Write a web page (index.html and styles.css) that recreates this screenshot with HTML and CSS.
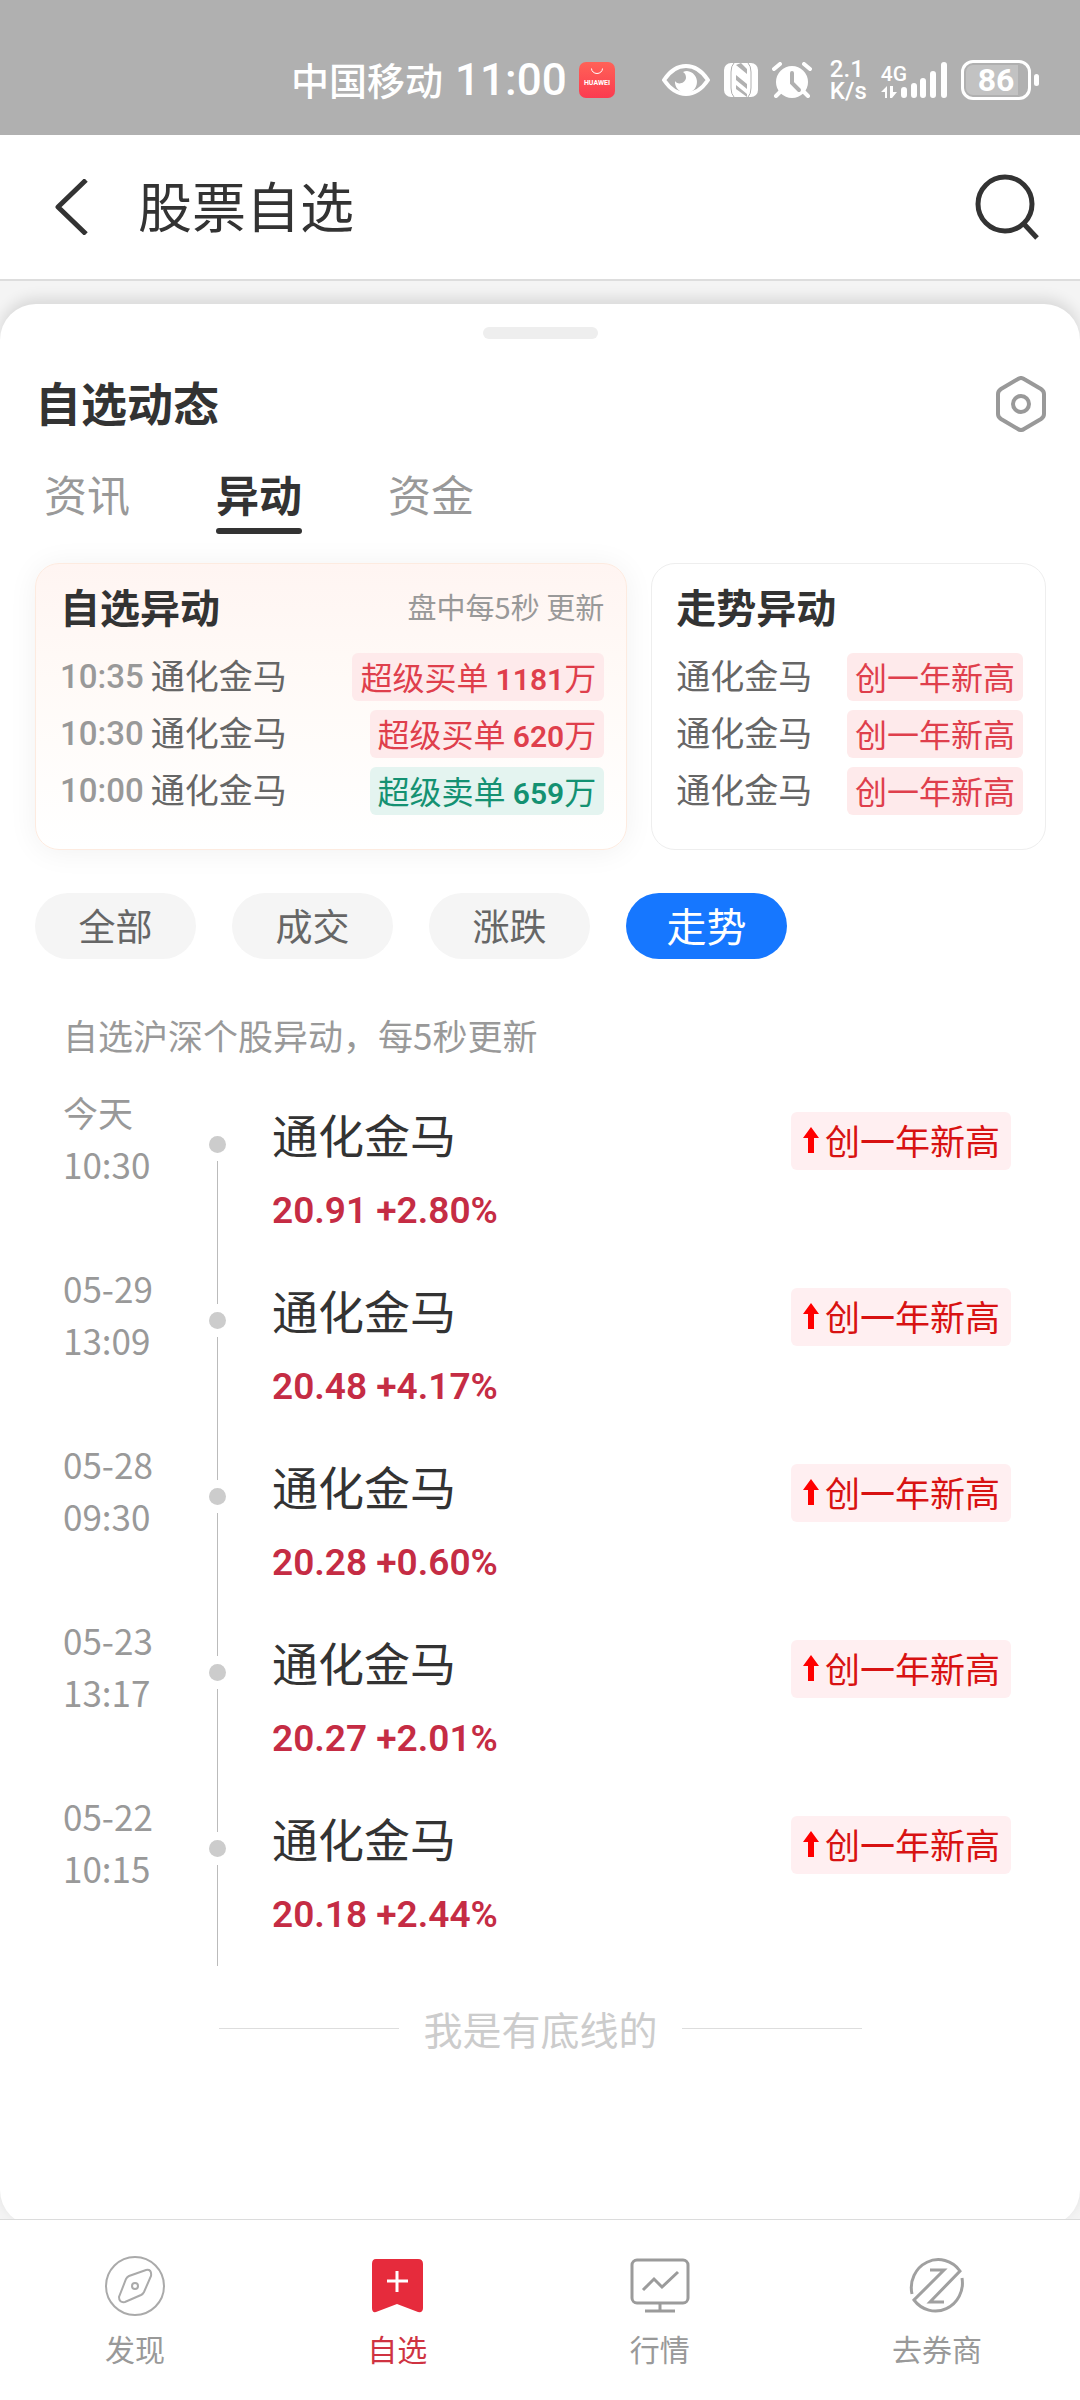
FILE: index.html
```
<!DOCTYPE html>
<html lang="zh-CN">
<head>
  <meta charset="utf-8">
  <meta name="viewport" content="width=device-width, initial-scale=1">
  <title>股票自选</title>
  <link rel="stylesheet" href="styles.css">
</head>
<body>
  <div class="status-bar">
    <div class="status-left">
      <span class="carrier">中国移动</span>
      <span class="clock">11:00</span>
      <svg class="app-icon" width="36" height="36" viewBox="0 0 36 36">
        <defs>
          <linearGradient id="appRed" x1="0" y1="0" x2="0" y2="1">
            <stop offset="0" stop-color="#ff6257"/>
            <stop offset="1" stop-color="#fb3b50"/>
          </linearGradient>
        </defs>
        <rect width="36" height="36" rx="7" fill="url(#appRed)"/>
        <path d="M12.500 6.500a5.500 5 0 0 0 11 0" fill="none" stroke="#fff" stroke-width="1"/>
        <text x="18" y="23" text-anchor="middle" font-size="7" font-weight="700" fill="#fff">HUAWEI</text>
      </svg>
    </div>
    <div class="status-right">
      <svg width="48" height="34" viewBox="0 0 48 34">
        <path d="M2 17C8 8 16 3 24 3s16 5 22 14c-6 9-14 14-22 14S8 26 2 17z" fill="none" stroke="#fff" stroke-width="4" stroke-linejoin="round"/>
        <path d="M25 8a11 11 0 1 1-12 10c2 4 10 3 11-3 0-3-1-5-3-6q2-1 4-1z" fill="#fff"/>
      </svg>
      <svg class="nfc" width="34" height="34" viewBox="0 0 34 34">
        <rect width="34" height="34" rx="7" fill="#fff"/>
        <path d="M10 0Q7 3 7 9v16q0 6 3 9M24 0q3 3 3 9v16q0 6-3 9" fill="none" stroke="#b0b0b0" stroke-width="1"/>
        <path d="M12 12l11 9v5L12 17zM12 22l11 9v3L12 26zM12 2l11 9V6l-6-6z" fill="#b0b0b0"/>
      </svg>
      <svg width="40" height="36" viewBox="0 0 40 36">
        <circle cx="20" cy="20" r="16" fill="#fff"/>
        <path d="M2 7l6-5M38 7l-6-5M8 30l-4 4M32 30l4 4" stroke="#fff" stroke-width="4" stroke-linecap="round"/>
        <path d="M20 11v10l7 7" fill="none" stroke="#b0b0b0" stroke-width="4" stroke-linecap="round"/>
      </svg>
      <div class="speed"><span>2.1</span><span>K/s</span></div>
      <div class="signal">
        <div class="network">
          <span>4G</span>
          <svg width="18" height="12" viewBox="0 0 18 12">
            <path d="M6 0v12H4V6H0zM9 0h3v6h4l-5 6H9z" fill="#fff"/>
          </svg>
        </div>
        <svg width="46" height="36" viewBox="0 0 46 36">
          <path d="M3 28v5M13 24v9M22 19v14M32 12v21M43 3v30" stroke="#fff" stroke-width="6" stroke-linecap="round"/>
        </svg>
      </div>
      <div class="battery"><span class="battery-level">86</span></div>
    </div>
  </div>

  <header class="topbar">
    <button class="icon-btn" type="button" aria-label="返回">
      <svg width="34" height="56" viewBox="0 0 34 56">
        <path d="M31 1L3 28l28 27" fill="none" stroke="#333" stroke-width="5" stroke-linejoin="round"/>
      </svg>
    </button>
    <h1>股票自选</h1>
    <button class="icon-btn" type="button" aria-label="搜索">
      <svg width="66" height="66" viewBox="0 0 66 66">
        <circle cx="30" cy="30" r="27" fill="none" stroke="#333" stroke-width="5"/>
        <path d="M49 50l13 14" stroke="#333" stroke-width="5"/>
      </svg>
    </button>
  </header>

  <main class="page">
    <section class="sheet">
      <div class="handle"></div>
      <div class="sheet-head">
        <h2>自选动态</h2>
        <button class="icon-btn" type="button" aria-label="设置">
          <svg width="50" height="56" viewBox="0 0 50 56">
            <path d="M22 3q3-2 6 0l17 10q3 2 3 5v20q0 3-3 5L28 53q-3 2-6 0L5 43q-3-2-3-5V18q0-3 3-5z" fill="none" stroke="#999" stroke-width="4"/>
            <circle cx="25" cy="28" r="8" fill="none" stroke="#999" stroke-width="4"/>
          </svg>
        </button>
      </div>

      <div class="tabs">
        <button class="tab" type="button">资讯</button>
        <button class="tab active" type="button">异动</button>
        <button class="tab" type="button">资金</button>
      </div>

      <div class="cards">
        <article class="card card-warm">
          <div class="card-head">
            <h3>自选异动</h3>
            <span class="hint">盘中每5秒 更新</span>
          </div>
          <ul class="card-list">
            <li><span class="time">10:35</span><span class="stock">通化金马</span><span class="tag">超级买单 <b>1181</b>万</span></li>
            <li><span class="time">10:30</span><span class="stock">通化金马</span><span class="tag">超级买单 <b>620</b>万</span></li>
            <li><span class="time">10:00</span><span class="stock">通化金马</span><span class="tag green">超级卖单 <b>659</b>万</span></li>
          </ul>
        </article>
        <article class="card">
          <div class="card-head">
            <h3>走势异动</h3>
          </div>
          <ul class="card-list">
            <li><span class="stock">通化金马</span><span class="tag">创一年新高</span></li>
            <li><span class="stock">通化金马</span><span class="tag">创一年新高</span></li>
            <li><span class="stock">通化金马</span><span class="tag">创一年新高</span></li>
          </ul>
        </article>
      </div>

      <div class="chips">
        <button class="chip" type="button">全部</button>
        <button class="chip" type="button">成交</button>
        <button class="chip" type="button">涨跌</button>
        <button class="chip active" type="button">走势</button>
      </div>

      <p class="note">自选沪深个股异动，每5秒更新</p>

      <ul class="timeline">
        <li class="event">
          <div class="when"><span>今天</span><span>10:30</span></div>
          <div class="rail"><i class="dot"></i></div>
          <div class="what"><h4>通化金马</h4><p class="price">20.91 +2.80%</p></div>
          <span class="badge"><svg width="16" height="26" viewBox="0 0 16 26"><path d="M8 0l8 11h-5v15H5V11H0z" fill="#f00"/></svg>创一年新高</span>
        </li>
        <li class="event">
          <div class="when"><span>05-29</span><span>13:09</span></div>
          <div class="rail"><i class="dot"></i></div>
          <div class="what"><h4>通化金马</h4><p class="price">20.48 +4.17%</p></div>
          <span class="badge"><svg width="16" height="26" viewBox="0 0 16 26"><path d="M8 0l8 11h-5v15H5V11H0z" fill="#f00"/></svg>创一年新高</span>
        </li>
        <li class="event">
          <div class="when"><span>05-28</span><span>09:30</span></div>
          <div class="rail"><i class="dot"></i></div>
          <div class="what"><h4>通化金马</h4><p class="price">20.28 +0.60%</p></div>
          <span class="badge"><svg width="16" height="26" viewBox="0 0 16 26"><path d="M8 0l8 11h-5v15H5V11H0z" fill="#f00"/></svg>创一年新高</span>
        </li>
        <li class="event">
          <div class="when"><span>05-23</span><span>13:17</span></div>
          <div class="rail"><i class="dot"></i></div>
          <div class="what"><h4>通化金马</h4><p class="price">20.27 +2.01%</p></div>
          <span class="badge"><svg width="16" height="26" viewBox="0 0 16 26"><path d="M8 0l8 11h-5v15H5V11H0z" fill="#f00"/></svg>创一年新高</span>
        </li>
        <li class="event">
          <div class="when"><span>05-22</span><span>10:15</span></div>
          <div class="rail"><i class="dot"></i></div>
          <div class="what"><h4>通化金马</h4><p class="price">20.18 +2.44%</p></div>
          <span class="badge"><svg width="16" height="26" viewBox="0 0 16 26"><path d="M8 0l8 11h-5v15H5V11H0z" fill="#f00"/></svg>创一年新高</span>
        </li>
      </ul>

      <p class="end">我是有底线的</p>
    </section>
  </main>

  <nav class="bottom-nav">
    <a href="#discover">
      <svg width="60" height="60" viewBox="0 0 60 60" fill="none" stroke="#aaa" stroke-width="2">
        <circle cx="30" cy="30" r="29"/>
        <path d="M24 20l17-6q6-1 5 6l-7 16q-1 2-3 3l-16 7q-6 1-6-5l7-18q1-2 3-3z"/>
        <circle cx="30" cy="30" r="3"/>
      </svg>
      <span>发现</span>
    </a>
    <a href="#watchlist" class="active">
      <svg width="60" height="60" viewBox="0 0 60 60">
        <path d="M9 3h42q5 0 5 5v44q0 5-5 4L30 48 9 56q-4 1-4-4V8q0-5 4-5z" fill="#e62b3c"/>
        <path d="M30 15v21M20 25h21" stroke="#fff" stroke-width="3"/>
      </svg>
      <span>自选</span>
    </a>
    <a href="#market">
      <svg width="60" height="60" viewBox="0 0 60 60" fill="none" stroke="#9b9b9b" stroke-width="3">
        <rect x="2" y="4" width="56" height="43" rx="5"/>
        <path d="M30 47v8M15 55h30M13 34l11-11 8 8 16-15"/>
      </svg>
      <span>行情</span>
    </a>
    <a href="#broker">
      <svg width="60" height="60" viewBox="0 0 60 60" fill="none" stroke="#a0a0a0" stroke-width="3">
        <path d="M5 38A27 28 0 0 1 53 15L23 46h14"/>
        <path d="M55 22A27 28 0 0 1 7 44L37 14H23"/>
      </svg>
      <span>去券商</span>
    </a>
  </nav>
</body>
</html>
```

FILE: styles.css
```
*{
  margin: 0;
  padding: 0;
  box-sizing: border-box;
}
body
{
  min-height: 100vh;
  display: flex;
  flex-direction: column;
  background: #fff;
  color: #333;
  font-family: "Noto Sans CJK SC", sans-serif;
}
ul
{
  list-style: none;
}
svg
{
  display: block;
  flex: none;
}
button
{
  border: none;
  background: none;
  font-family: inherit;
  color: inherit;
  cursor: pointer;
}
a
{
  text-decoration: none;
}

/* status bar */
.status-bar
{
  height: 135px;
  padding: 25px 49px 0 291px;
  display: flex;
  align-items: center;
  justify-content: space-between;
  background: #b0b0b0;
  color: #fff;
}
.status-left, .status-right
{
  display: flex;
  align-items: center;
}
.carrier
{
  font-size: 38px;
  font-weight: 500;
  line-height: 48px;
  padding-bottom: 2px;
}
.clock
{
  margin: 0 12px;
  font-family: Roboto, sans-serif;
  font-size: 44px;
  font-weight: 500;
  line-height: 48px;
}
.app-icon text
{
  font-family: Roboto, sans-serif;
}
.status-right
{
  gap: 14px;
}
.speed
{
  display: flex;
  flex-direction: column;
  margin-left: 4px;
  font-family: Roboto, sans-serif;
  font-size: 24px;
  font-weight: 500;
  line-height: 22px;
}
.signal
{
  display: flex;
  align-items: flex-end;
}
.signal > svg
{
  margin-left: -6px;
}
.network
{
  font-family: Roboto, sans-serif;
  font-size: 21px;
  font-weight: 500;
  line-height: 24px;
}
.battery
{
  width: 70px;
  height: 40px;
  padding: 2px;
  border: 3px solid #fff;
  border-radius: 12px;
  position: relative;
}
.battery::after
{
  content: '';
  position: absolute;
  top: 11px;
  right: -11px;
  width: 5px;
  height: 12px;
  border-radius: 3px;
  background: #fff;
}
.battery-level
{
  display: block;
  border-radius: 7px;
  background: linear-gradient(90deg, #c2c2c2 86%, #b0b0b0 86%);
  font-family: Roboto, sans-serif;
  font-size: 32px;
  font-weight: 700;
  line-height: 30px;
  text-align: center;
}

/* title bar */
.topbar
{
  height: 146px;
  padding: 0 39px 0 55px;
  display: flex;
  align-items: center;
  border-bottom: 2px solid #ddd;
  background: #fff;
}
.topbar h1
{
  flex: 1;
  margin-left: 49px;
  padding-bottom: 4px;
  font-size: 54px;
  font-weight: 400;
  line-height: 72px;
}

/* sheet */
.page
{
  flex: 1;
  display: flex;
  flex-direction: column;
  padding-top: 23px;
  background: #f4f4f4;
}
.sheet
{
  flex: 1;
  margin-bottom: -7px;
  padding: 23px 34px 40px 35px;
  border-radius: 36px;
  background: #fff;
  box-shadow: 0 -6px 14px rgba(0,0,0,0.11);
}
.handle
{
  width: 115px;
  height: 12px;
  margin: 0 auto;
  border-radius: 6px;
  background: #eee;
}
.sheet-head
{
  margin-top: 37px;
  display: flex;
  align-items: flex-start;
  justify-content: space-between;
}
.sheet-head h2
{
  font-size: 46px;
  font-weight: 700;
  line-height: 50px;
}
.tabs
{
  display: flex;
  gap: 86px;
  margin-top: 38px;
  padding-left: 9px;
}
.tab
{
  position: relative;
  padding-bottom: 18px;
  font-size: 43px;
  line-height: 46px;
  color: #999;
}
.tab.active
{
  color: #333;
  font-weight: 700;
}
.tab.active::after
{
  content: '';
  position: absolute;
  left: 0;
  right: 0;
  bottom: 0;
  height: 6px;
  border-radius: 3px;
  background: #333;
}

/* cards */
.cards
{
  display: grid;
  grid-template-columns: 3fr 2fr;
  gap: 24px;
  margin-top: 29px;
}
.card
{
  padding: 18px 22px 34px 24px;
  border: 1px solid #eee;
  border-radius: 24px;
  background: #fff;
}
.card-warm
{
  border-color: #fdebe0;
  background: linear-gradient(#fff5f2, #fffaf7 40%, #fff);
  box-shadow: 0 2px 30px rgba(0,0,0,0.06);
}
.card-head
{
  display: flex;
  align-items: center;
  justify-content: space-between;
}
.card-head h3
{
  font-size: 40px;
  font-weight: 700;
  line-height: 48px;
}
.hint
{
  font-size: 29px;
  line-height: 48px;
  color: #999;
}
.card-list
{
  display: flex;
  flex-direction: column;
  gap: 9px;
  margin-top: 23px;
}
.card-list li
{
  height: 48px;
  display: flex;
  align-items: flex-start;
}
.time
{
  margin-right: 7px;
  font-family: Roboto, sans-serif;
  font-size: 33px;
  font-weight: 500;
  line-height: 48px;
  color: #999;
}
.stock
{
  font-size: 34px;
  line-height: 44px;
  color: #666;
}
.tag
{
  height: 48px;
  margin-left: auto;
  padding: 0 8px;
  border-radius: 6px;
  background: #feeaeb;
  font-size: 32px;
  line-height: 46px;
  color: #df3f4c;
  white-space: nowrap;
}
.tag b
{
  font-family: Roboto, sans-serif;
  font-size: 30px;
  font-weight: 600;
}
.tag.green
{
  background: #e4f4f0;
  color: #149172;
}

/* filters */
.chips
{
  display: flex;
  gap: 36px;
  margin-top: 43px;
}
.chip
{
  width: 161px;
  height: 66px;
  padding-bottom: 2px;
  border-radius: 33px;
  background: #f5f5f5;
  font-size: 37px;
  line-height: 64px;
  color: #666;
}
.chip.active
{
  background: #1677ff;
  font-size: 40px;
  color: #fff;
}
.note
{
  margin-top: 52px;
  padding-left: 28px;
  font-size: 35px;
  line-height: 48px;
  color: #999;
}

/* timeline */
.timeline
{
  margin-top: 27px;
  padding: 0 35px 0 28px;
}
.event
{
  min-height: 176px;
  display: grid;
  grid-template-columns: 146px 17px 1fr auto;
}
.when
{
  display: flex;
  flex-direction: column;
  font-size: 35px;
  line-height: 52px;
  color: #999;
}
.rail
{
  display: flex;
  flex-direction: column;
  align-items: center;
}
.rail::before, .rail::after
{
  content: '';
  width: 1px;
  background: #bbb;
}
.rail::before
{
  height: 42px;
}
.rail::after
{
  flex: 1;
}
.event:first-child .rail::before
{
  background: none;
}
.dot
{
  width: 17px;
  height: 17px;
  margin: 8px 0;
  border-radius: 50%;
  background: #ccc;
}
.what
{
  padding: 18px 0 0 46px;
}
.what h4
{
  font-size: 46px;
  font-weight: 400;
  line-height: 58px;
}
.price
{
  margin-top: 25px;
  font-family: Roboto, sans-serif;
  font-size: 37px;
  font-weight: 600;
  line-height: 48px;
  color: #c52c44;
}
.badge
{
  align-self: start;
  height: 58px;
  display: flex;
  align-items: center;
  gap: 6px;
  margin-top: 26px;
  padding: 0 11px 2px 12px;
  border-radius: 6px;
  background: #ffeff1;
  font-size: 35px;
  line-height: 56px;
  color: #d81212;
}
.end
{
  display: flex;
  align-items: center;
  justify-content: center;
  gap: 24px;
  margin-top: 34px;
  font-size: 39px;
  line-height: 56px;
  color: #ccc;
}
.end::before, .end::after
{
  content: '';
  width: 180px;
  height: 1px;
  background: #ddd;
}

/* bottom navigation */
.bottom-nav
{
  position: relative;
  min-height: 181px;
  padding: 36px 98px 0 105px;
  display: flex;
  justify-content: space-between;
  border-top: 1px solid #dcdcdc;
  background: #fff;
}
.bottom-nav a
{
  display: flex;
  flex-direction: column;
  align-items: center;
  gap: 14px;
  font-size: 30px;
  line-height: 36px;
  color: #999;
}
.bottom-nav a.active
{
  color: #cf3341;
}
```
